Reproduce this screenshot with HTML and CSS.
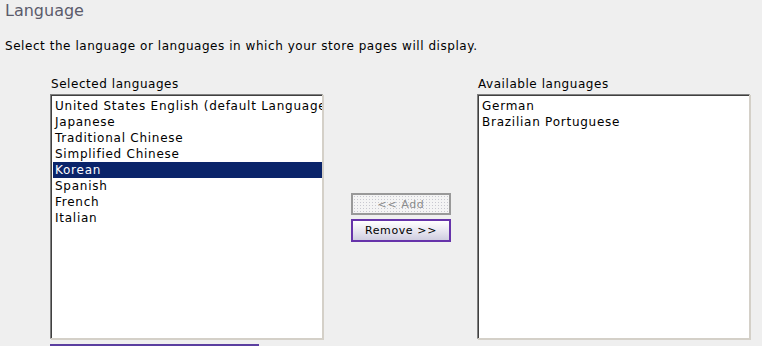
FILE: index.html
```html
<!DOCTYPE html>
<html>
<head>
    <title>Language</title>
    <link rel="stylesheet" href="styles.css">
</head>
<body>
    <h1 class="title">Language</h1>
    <p class="intro">Select the language or languages in which your store pages will display.</p>

    <div class="picker">
        <div class="col">
            <label class="cap">Selected languages</label>
            <div class="box">
                <ul class="list">
                    <li>United States English (default Language)</li>
                    <li>Japanese</li>
                    <li>Traditional Chinese</li>
                    <li>Simplified Chinese</li>
                    <li class="sel">Korean</li>
                    <li>Spanish</li>
                    <li>French</li>
                    <li>Italian</li>
                </ul>
            </div>
            <div class="below"></div>
        </div>

        <div class="btns">
            <button class="btn off" disabled>&lt;&lt; Add</button>
            <button class="btn on">Remove &gt;&gt;</button>
        </div>

        <div class="col">
            <label class="cap">Available languages</label>
            <div class="box">
                <ul class="list">
                    <li>German</li>
                    <li>Brazilian Portuguese</li>
                </ul>
            </div>
        </div>
    </div>
</body>
</html>
```

FILE: styles.css
```css
body {
    margin: 0;
    padding: 0 5px;
    background-color: #efefef;
    font-family: "DejaVu Sans", Verdana, sans-serif;
    font-size: 12px;
    letter-spacing: 0.55px;
    color: #000;
    overflow: hidden;
}
.title {
    margin: 0;
    padding-top: 1px;
    font-size: 16px;
    font-weight: normal;
    letter-spacing: 0;
    color: #5b5b6b;
    line-height: 20px;
}
.intro {
    margin: 17px 0 0 0;
    line-height: 16px;
}
.picker {
    display: flex;
    margin: 22px 0 0 45px;
}
.col {
    display: flex;
    flex-direction: column;
}
.cap {
    line-height: 16px;
    padding-left: 1px;
    margin-bottom: 2px;
}
.box {
    width: 271px;
    height: 243px;
    border: 1px solid #d4d0c8;
    border-top-color: #808080;
    border-left-color: #808080;
    background: #fff;
    box-shadow: inset 1px 1px 0 #404040, 1px 1px 0 #d4d0c8;
    overflow: hidden;
}
.list {
    list-style: none;
    margin: 0;
    padding: 3px 0 0 2px;
    white-space: nowrap;
    letter-spacing: 0.75px;
}
.list li {
    line-height: 16px;
    padding-left: 2px;
}
.list li.sel {
    background-color: #0a246a;
    color: #fff;
}
.below {
    width: 209px;
    margin-top: 5px;
    border-top: 2px solid #5b3fa0;
}
.btns {
    display: flex;
    flex-direction: column;
    gap: 4px;
    margin: 117px 26px 0 28px;
}
.btn {
    width: 100px;
    height: 23px;
    padding: 0;
    font-family: "DejaVu Sans", Verdana, sans-serif;
    font-size: 11px;
    letter-spacing: 0.6px;
}
.off {
    height: 22px;
    border: 2px solid #999;
    color: #8a8a8a;
    background-color: #f4f4f4;
    background-image: radial-gradient(#c8c8d0 0.8px, transparent 1px);
    background-size: 3px 3px;
}
.on {
    border: 2px solid #6633aa;
    color: #000;
    background: linear-gradient(#ffffff, #e4e2ee 60%, #cfcde0);
}
```
